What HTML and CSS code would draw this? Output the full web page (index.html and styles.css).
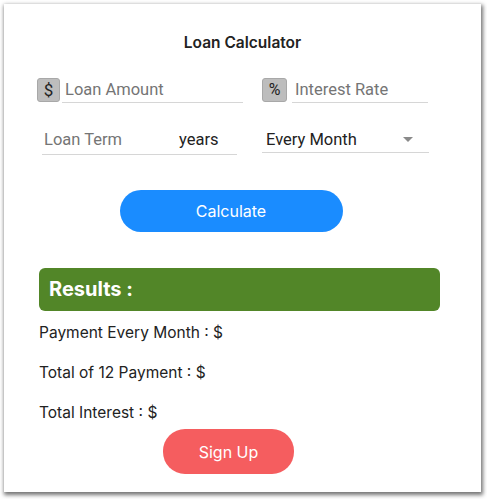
FILE: index.html
```html
<!DOCTYPE html>
<html>
<head>
<meta charset="utf-8">
<link rel="stylesheet" href="styles.css">
</head>
<body>
<div class="card">
  <h1 class="title">Loan Calculator</h1>
  <div class="row row1">
    <div class="field f-amount">
      <span class="addon">$</span>
      <span class="input w-amount">Loan Amount</span>
    </div>
    <div class="field f-rate">
      <span class="addon pct">%</span>
      <span class="input w-rate">Interest Rate</span>
    </div>
  </div>
  <div class="row row2">
    <div class="input term"><span class="ph">Loan Term</span><span class="suffix">years</span></div>
    <div class="input select"><span>Every Month</span><span class="caret"></span></div>
  </div>
  <div class="center"><button class="btn calc">Calculate</button></div>
  <div class="results">Results :</div>
  <p class="line">Payment Every Month : $</p>
  <p class="line">Total of 12 Payment : $</p>
  <p class="line">Total Interest : $</p>
  <div class="center"><button class="btn signup">Sign Up</button></div>
</div>
</body>
</html>
```
FILE: styles.css
```css
html, body { margin: 0; padding: 0; background: #fff; }
body { padding: 4px 6px 7px 4px; font-family: "Inter", "Noto Sans", sans-serif; color: #222; }
.card {
  height: 488px;
  box-sizing: border-box;
  background: #fff;
  box-shadow: 1px 2px 4px 1px rgba(0,0,0,0.55);
  padding: 29px 41px 0 35px;
}
.title { margin: 0; text-align: center; font-size: 15.5px; font-weight: 600; line-height: 20px; color: #222; padding-left: 6px; }
.row { display: flex; }
.row1 { margin-top: 23px; height: 27px; }
.field { display: flex; align-items: center; }
.f-amount { width: 223px; }
.f-rate { margin-left: 0; }
.addon {
  width: 23px; height: 24px; box-sizing: border-box;
  background: #bdbdbd; border: 1px solid #a8a8a8; border-radius: 3px;
  display: flex; align-items: center; justify-content: center;
  font-family: "Roboto", sans-serif; font-size: 17px; color: #222; margin-left: -2px;
}
.pct { width: 25px; font-size: 16px; margin-left: 0; }
.input {
  font-family: "Roboto", sans-serif; font-size: 16.5px; color: #757575;
  border-bottom: 1px solid #d6d6d6; height: 26px; line-height: 26px; box-sizing: border-box;
}
.w-amount { width: 181px; margin-left: 2px; padding-left: 3px; }
.w-rate { width: 136px; margin-left: 5px; padding-left: 3px; }
.row2 { margin-top: 24px; }
.term { width: 195px; margin-left: 3px; padding-left: 2px; display: flex; height: 28px; }
.term .suffix { margin-left: 57px; color: #222; }
.select { width: 167px; margin-left: 25px; padding-left: 4px; color: #222; display: flex; justify-content: space-between; align-items: center; height: 26px; }
.caret { width: 0; height: 0; border-left: 5px solid transparent; border-right: 5px solid transparent; border-top: 5px solid #8a8a8a; margin-right: 16px; }
.center { display: flex; justify-content: center; }
.btn { border: none; border-radius: 22px; color: #fff; font-family: "Inter", "Noto Sans", sans-serif; font-size: 16px; }
.calc { width: 223px; height: 42px; background: #1a8cff; margin-top: 35px; margin-left: -17px; }
.results {
  margin-top: 36px; height: 43px; background: #528628; border-radius: 6px;
  color: #fff; font-weight: 700; font-size: 20px; line-height: 43px; padding-left: 10px;
}
.line { margin: 12px 0 0 0; font-size: 15.5px; line-height: 20px; height: 20px; color: #222; }
.line + .line { margin-top: 20px; }
.signup { width: 131px; height: 45px; background: #f55d5f; margin-top: 6px; margin-left: -22px; }
```
